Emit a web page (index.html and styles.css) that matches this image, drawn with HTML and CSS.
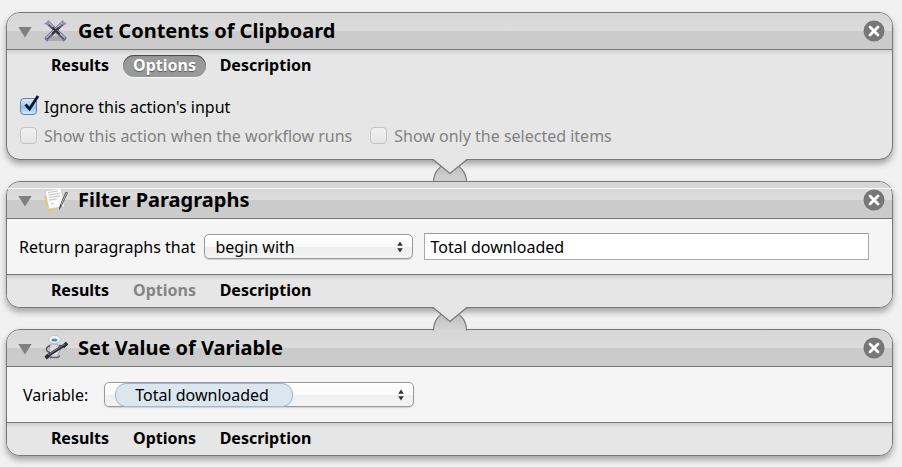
FILE: index.html
```html
<!DOCTYPE html>
<html lang="en">
<head>
<meta charset="utf-8">
<title>Workflow</title>
<link rel="stylesheet" href="styles.css">
</head>
<body>
<svg class="defs" aria-hidden="true">
  <defs>
    <linearGradient id="dome" x1="0" y1="0" x2="0" y2="1">
      <stop offset="0" stop-color="#bcbcbc"/><stop offset="1" stop-color="#d6d6d6"/>
    </linearGradient>
    <symbol id="close" viewBox="0 0 22 22">
      <circle cx="11" cy="11" r="10.5" fill="#777"/>
      <path d="M7 7l8 8M15 7l-8 8" stroke="#fff" stroke-width="2.8" stroke-linecap="round"/>
    </symbol>
    <symbol id="steppers" viewBox="0 0 8 12">
      <path d="M4 0.5L6.8 4.8H1.2zM4 11.5L6.8 7.2H1.2z" fill="#333"/>
    </symbol>
    <symbol id="joint" viewBox="0 0 36 24">
      <path d="M1 23.5C1 13 8 5 18 5s17 8 17 18.5V24H1z" fill="url(#dome)" stroke="none"/>
      <path d="M1.5 23.5C1.5 13 8 5 18 5s16.500 8 16.500 18.500" fill="none" stroke="#7d7d7d" stroke-width="1.200"/>
      <path d="M0 0H36L18 14.500z" fill="#e6e6e6"/>
      <path d="M0 .5H1L18 14.500 35 .5H36" fill="none" stroke="#777" stroke-width="1.300"/>
    </symbol>
  </defs>
</svg>
<main class="workflow">
  <section class="card">
    <header class="card-header">
      <button class="disclosure" aria-label="Collapse"></button>
      <svg class="card-icon" viewBox="0 0 26 26" aria-hidden="true">
        <path d="M5 23h16l-4-5H9z" fill="#a0a0a2" opacity=".8"/>
        <path d="M4 4l18 17M21 4L3 21" stroke="#5c5a70" stroke-width="4"/>
        <path d="M4 3l18 17M21 3L3 20" stroke="#b9b5d8" stroke-width="1.600"/>
        <path d="M1.500 5.500L5 6l.5-3.500M19.500 2.500L20 6l3.500-.5" fill="none" stroke="#9591b4" stroke-width="1.700"/>
        <path d="M9.500 9.500l7 6.500M16 9.500L9 16" stroke="#34333f" stroke-width="2.200"/>
        <path d="M2 20l3 3M20 23l3-3" stroke="#77758a" stroke-width="2"/>
      </svg>
      <h2>Get Contents of Clipboard</h2>
      <button class="close" aria-label="Remove Get Contents of Clipboard"><svg><use href="#close"/></svg></button>
    </header>
    <div class="tabs">
      <button>Results</button><button class="active">Options</button><button>Description</button>
    </div>
    <div class="options">
      <div class="option-row">
        <label class="check"><span class="box"><input type="checkbox" checked><svg class="tick" viewBox="0 0 18 18" aria-hidden="true"><path d="M3.500 9.500L7.500 14 16 1" fill="none" stroke="#07152d" stroke-width="2.800"/></svg></span>Ignore this action's input</label>
      </div>
      <div class="option-row">
        <label class="check muted"><span class="box"><input type="checkbox" disabled></span>Show this action when the workflow runs</label>
        <label class="check muted"><span class="box"><input type="checkbox" disabled></span>Show only the selected items</label>
      </div>
    </div>
  </section>
  <svg class="joint" aria-hidden="true"><use href="#joint"/></svg>
  <section class="card seam">
    <header class="card-header">
      <button class="disclosure" aria-label="Collapse"></button>
      <svg class="card-icon" viewBox="0 0 26 26" aria-hidden="true">
        <path d="M1 10l5 14 6-1-6-16z" fill="#e9cb4c"/>
        <path d="M2 4l16-3 3.500 18.500L6 22z" fill="#fafafa" stroke="#c4c4c4" stroke-width=".7"/>
        <path d="M5 5.500l10-1.500M5.500 8l11-1.500M6 10.500l11-1.500M6.500 13l7-1M8 17l3-.5" stroke="#bcbcbc" stroke-width=".9"/>
        <path d="M25 5.500l-6.500 14-2.500 4 .5-4.500L22.500 5z" fill="#4f4f4f"/>
        <path d="M23.500 6L18 18" stroke="#c4c4c4" stroke-width=".9"/>
      </svg>
      <h2>Filter Paragraphs</h2>
      <button class="close" aria-label="Remove Filter Paragraphs"><svg><use href="#close"/></svg></button>
    </header>
    <div class="fields">
      <label for="match">Return paragraphs that</label>
      <span class="popup match"><select id="match"><option>begin with</option></select><svg class="steppers" aria-hidden="true"><use href="#steppers"/></svg></span>
      <input class="text" type="text" value="Total downloaded" aria-label="Text to match">
    </div>
    <div class="tabs ruled">
      <button>Results</button><button disabled>Options</button><button>Description</button>
    </div>
  </section>
  <svg class="joint" aria-hidden="true"><use href="#joint"/></svg>
  <section class="card">
    <header class="card-header">
      <button class="disclosure" aria-label="Collapse"></button>
      <svg class="card-icon" viewBox="0 0 26 26" aria-hidden="true">
        <path d="M7.500 9h7l2.500 6-3 7H8.500L6 15z" fill="#dcdde2" stroke="#8b8d98" stroke-width=".7"/>
        <path d="M7 10.500q-5 2-3 5.500l3 2M16 10.500q3 0 3 2.500" fill="none" stroke="#555763" stroke-width="1.500"/>
        <ellipse cx="11.500" cy="4.500" rx="5.800" ry="4" fill="#f6f7f9" stroke="#aaa" stroke-width=".6"/>
        <ellipse cx="11.500" cy="5" rx="3" ry="1.500" fill="#2f94d6"/>
        <path d="M3.500 21.500L24 8.500" stroke="#2b2b36" stroke-width="3"/>
        <path d="M2.500 23l4-3M20 12l4-4" stroke="#2b2b36" stroke-width="3.500"/>
        <path d="M5 20L22 9" stroke="#85839a" stroke-width=".9"/>
        <path d="M7 22.500h8l2-2" fill="none" stroke="#666874" stroke-width="1.300"/>
      </svg>
      <h2>Set Value of Variable</h2>
      <button class="close" aria-label="Remove Set Value of Variable"><svg><use href="#close"/></svg></button>
    </header>
    <div class="fields variable-fields">
      <label for="variable">Variable:</label>
      <span class="popup variable"><select id="variable"><option>Total downloaded</option></select><svg class="steppers" aria-hidden="true"><use href="#steppers"/></svg></span>
    </div>
    <div class="tabs ruled">
      <button>Results</button><button>Options</button><button>Description</button>
    </div>
  </section>
</main>
</body>
</html>
```
FILE: styles.css
```css
* { box-sizing: border-box; }

body {
  margin: 0;
  background: #f1f1f1;
  color: #000;
  font: 16px/20px "Noto Sans", "Open Sans", sans-serif;
}

button, input, select { font: inherit; color: inherit; margin: 0; }
button { padding: 0; border: 0; background: none; }

.defs { position: absolute; width: 0; height: 0; }

.workflow {
  display: flex;
  flex-direction: column;
  padding: 12px 9px 10px 6px;
}

.card {
  border: 1px solid #777;
  border-radius: 14px;
  background: #e6e6e6;
  box-shadow: 0 4px 6px rgba(0, 0, 0, .32);
}

.seam { position: relative; }
.seam::before {
  content: "";
  position: absolute;
  top: 6px;
  left: -3px;
  right: -3px;
  height: 1px;
  background: #f6f6f6;
}

.card-header {
  display: flex;
  align-items: center;
  height: 37px;
  padding: 0 7px 0 11px;
  border-bottom: 1px solid #777;
  border-radius: 13px 13px 0 0;
  background: linear-gradient(#d6d6d6, #dcdcdc 50%, #cbcbcb 50%, #cbcbcb);
}

.disclosure {
  width: 14px;
  height: 11px;
  margin-top: 2px;
  background: #808080;
  clip-path: polygon(0 0, 100% 0, 50% 100%);
}

.card-icon { width: 26px; height: 26px; margin: 0 9px 0 11px; }

h2 { flex: 1; margin: 0; font-size: 20px; line-height: 24px; font-weight: 700; }

.close { width: 22px; height: 22px; }
.close svg { display: block; width: 22px; height: 22px; }

.tabs {
  display: grid;
  grid-template-columns: 78px 83px 111px;
  column-gap: 4px;
  align-items: center;
  height: 32px;
  padding-left: 34px;
  border-radius: 0 0 13px 13px;
  background: linear-gradient(#cfcfcf, #e6e6e6 5px);
  font-weight: 700;
}
.tabs.ruled { height: 33px; border-top: 1px solid #777; }
.tabs button { height: 22px; padding-bottom: 2px; border-radius: 11px; line-height: 20px; }
.tabs button:disabled { color: #858585; }
.tabs .active {
  background: #999;
  box-shadow: inset 0 1px 1px #444, 0 1px 0 #f6f6f6;
  color: #fff;
  text-shadow: 0 1px 1px #555;
}

.options { padding: 10px 13px 9px; }
.option-row { display: flex; gap: 18px; height: 29px; align-items: center; }
.check { display: flex; align-items: center; gap: 7px; }
.muted { color: #828282; }
.box { position: relative; width: 17px; height: 17px; }
.box input {
  appearance: none;
  display: block;
  width: 17px;
  height: 17px;
  border: 1px solid #c4c4c4;
  border-radius: 4px;
  background: linear-gradient(#f0f0f0, #e6e6e6);
}
.box input:checked {
  border-color: #6b7f9e;
  background: linear-gradient(#dcecfb, #93c3ee 55%, #c9edff);
}
.tick { position: absolute; left: 2px; top: -3px; width: 18px; height: 18px; pointer-events: none; }

.joint { position: relative; width: 36px; height: 24px; margin: -1px auto -2px; }

.fields {
  display: flex;
  align-items: center;
  height: 55px;
  padding: 0 23px 0 12px;
  background: #f5f5f5;
}
.fields label { white-space: nowrap; }

.popup {
  position: relative;
  z-index: 0;
  height: 25px;
  border: 1px solid #999;
  border-radius: 5px;
  background: linear-gradient(#fff, #fafafa 50%, #efefef 50%, #f4f4f4);
  box-shadow: 0 1px 1px rgba(0, 0, 0, .15);
}
.popup select {
  appearance: none;
  display: block;
  width: 100%;
  height: 23px;
  padding: 0 24px 0 10px;
  border: 0;
  background: none;
}
.steppers { position: absolute; right: 8px; top: 6px; width: 8px; height: 12px; pointer-events: none; }

.match { width: 209px; margin: 0 11px 0 9px; }
.text {
  flex: 1;
  min-width: 0;
  height: 27px;
  padding: 0 5px;
  border: 1px solid #aaa;
  border-top-color: #999;
  border-radius: 0;
  background: #fff;
}

.variable-fields { padding-left: 16px; }
.variable { width: 310px; margin-left: 16px; }
.variable select { padding-left: 30px; }
.variable::before {
  content: "";
  position: absolute;
  z-index: -1;
  left: 10px;
  top: 0;
  width: 176px;
  height: 22px;
  border: 1px solid #9db8d2;
  border-radius: 11px;
  background: #dbe6ef;
}
```
